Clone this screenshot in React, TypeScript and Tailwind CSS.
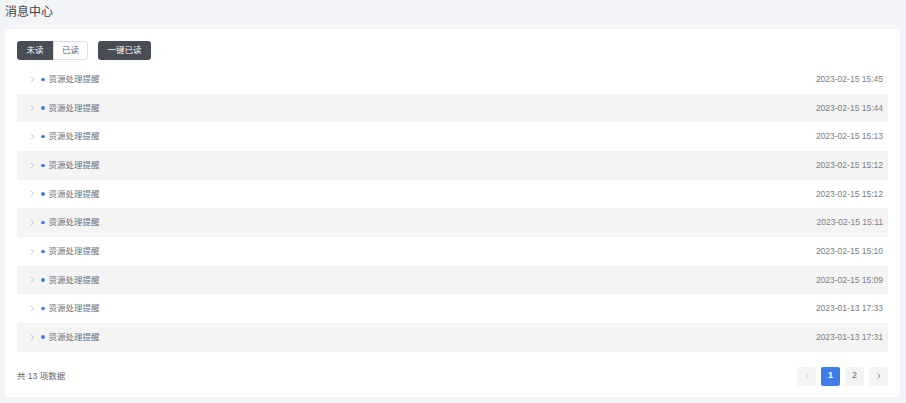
import { ChevronLeft, ChevronRight } from "lucide-react";

const messages = [
  "2023-02-15 15:45",
  "2023-02-15 15:44",
  "2023-02-15 15:13",
  "2023-02-15 15:12",
  "2023-02-15 15:12",
  "2023-02-15 15:11",
  "2023-02-15 15:10",
  "2023-02-15 15:09",
  "2023-01-13 17:33",
  "2023-01-13 17:31",
];

export default function App() {
  return (
    <div
      className="h-[403px] w-[906px] bg-[#f3f4f7] px-[5px] text-[#606266]"
      style={{ fontFamily: '"Liberation Sans", "Noto Sans CJK SC", sans-serif' }}
    >
      <div className="flex h-[29px] items-center pb-[5px] text-[12px] text-[#404246]">消息中心</div>
      <div className="h-[368px] w-[895px] rounded-[3px] bg-white px-3 pt-3">
        <div className="flex items-center text-[8.5px]">
          <div className="flex">
            <button className="h-[19px] w-[36px] rounded-l-[3px] bg-[#474c55] text-white">未读</button>
            <button className="h-[19px] w-[35px] rounded-r-[3px] border border-[#dcdfe6] text-[#606266]">已读</button>
          </div>
          <button className="ml-[10px] h-[19px] w-[53px] rounded-[3px] bg-[#474c55] text-white">一键已读</button>
        </div>

        <div className="mt-[5px]">
          {messages.map((time, i) => (
            <div
              key={i}
              className={`flex h-[28.67px] items-center justify-between pr-[5px] text-[8.5px] ${i % 2 === 1 ? "bg-[#f4f4f5]" : ""}`}
            >
              <div className="flex items-center">
                <ChevronRight className="ml-[11px] h-[9px] w-[9px] text-[#909399]" strokeWidth={1.5} />
                <span className="ml-[4px] h-[3.5px] w-[3.5px] rounded-full bg-[#3f7ee8]" />
                <span className="ml-[4px] text-[#6e7176]">资源处理提醒</span>
              </div>
              <span className="text-[#7a7d82]">{time}</span>
            </div>
          ))}
        </div>

        <div className="mt-[15px] flex items-center justify-between text-[8.5px]">
          <span className="text-[#606266]">共 13 项数据</span>
          <div className="flex items-center gap-[5px]">
            <button className="flex h-[19px] w-[19px] items-center justify-center rounded-[2px] bg-[#f4f4f5] text-[#c0c4cc]">
              <ChevronLeft className="h-[8px] w-[8px]" />
            </button>
            <button className="h-[19px] w-[19px] rounded-[2px] bg-[#3f7ee8] text-[9px] font-bold text-white">1</button>
            <button className="h-[19px] w-[19px] rounded-[2px] bg-[#f4f4f5] text-[9px] text-[#606266]">2</button>
            <button className="flex h-[19px] w-[19px] items-center justify-center rounded-[2px] bg-[#f4f4f5] text-[#606266]">
              <ChevronRight className="h-[8px] w-[8px]" />
            </button>
          </div>
        </div>
      </div>
    </div>
  );
}
